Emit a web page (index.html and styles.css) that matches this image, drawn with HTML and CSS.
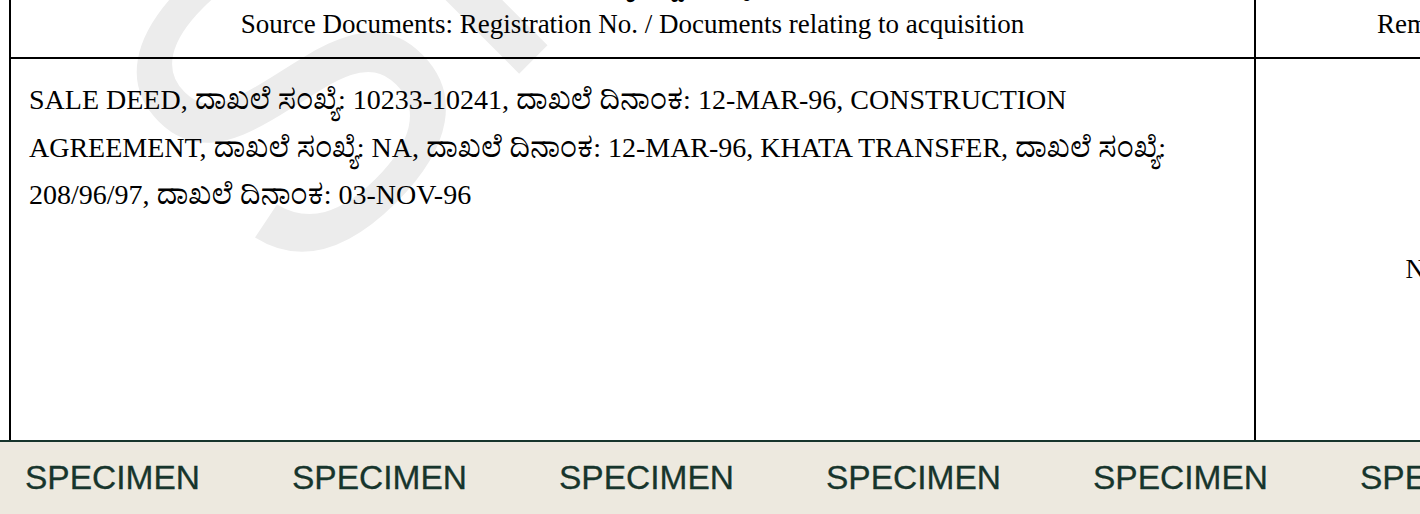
FILE: index.html
```html
<!DOCTYPE html>
<html lang="en">
<head>
<meta charset="utf-8">
<title>RTC Record</title>
<link rel="stylesheet" href="styles.css">
</head>
<body>
<div class="sheet">
  <div class="watermark" aria-hidden="true">SPECIMEN</div>
  <table class="rtc">
    <colgroup>
      <col class="col-main">
      <col class="col-remarks">
    </colgroup>
    <thead>
      <tr>
        <th class="head-cell">
          <span class="head-kn">ಮೂಲ ದಾಖಲೆಗಳು: ನೋಂದಣಿ ಸಂಖ್ಯೆ / ಸ್ವಾಧೀನಕ್ಕೆ ಸಂಬಂಧಿಸಿದ ದಾಖಲೆಗಳು</span>
          <span class="head-en">Source Documents: Registration No. / Documents relating to acquisition</span>
        </th>
        <th class="head-cell">
          <span class="head-kn">ಷರಾ</span>
          <span class="head-en">Remarks</span>
        </th>
      </tr>
    </thead>
    <tbody>
      <tr>
        <td class="body-cell">SALE DEED, ದಾಖಲೆ ಸಂಖ್ಯೆ: 10233-10241, ದಾಖಲೆ ದಿನಾಂಕ: 12-MAR-96, CONSTRUCTION AGREEMENT, ದಾಖಲೆ ಸಂಖ್ಯೆ: NA, ದಾಖಲೆ ದಿನಾಂಕ: 12-MAR-96, KHATA TRANSFER, ದಾಖಲೆ ಸಂಖ್ಯೆ: 208/96/97, ದಾಖಲೆ ದಿನಾಂಕ: 03-NOV-96</td>
        <td class="body-cell remarks-cell">NA</td>
      </tr>
    </tbody>
  </table>
</div>
<footer class="specimen-bar">
  <span class="specimen-word">SPECIMEN</span>
  <span class="specimen-word">SPECIMEN</span>
  <span class="specimen-word">SPECIMEN</span>
  <span class="specimen-word">SPECIMEN</span>
  <span class="specimen-word">SPECIMEN</span>
  <span class="specimen-word">SPECIMEN</span>
</footer>
</body>
</html>
```
FILE: styles.css
```css
html, body {
  margin: 0;
  padding: 0;
  background: #ffffff;
  overflow: hidden;
}

body {
  width: 1420px;
  height: 514px;
  font-family: "Liberation Serif", "Noto Serif Kannada", "Noto Sans Kannada", serif;
  color: #000;
}

.sheet {
  position: relative;
  padding-left: 9px;
  margin-top: -49px;
}

.watermark {
  position: absolute;
  left: 34px;
  top: 93px;
  font-family: "Liberation Sans", Arial, sans-serif;
  font-size: 430px;
  line-height: 1;
  color: #ececec;
  white-space: nowrap;
  transform-origin: 0 0;
  transform: rotate(-45deg);
  z-index: 0;
  pointer-events: none;
}

.rtc {
  position: relative;
  z-index: 1;
  border-collapse: collapse;
  table-layout: fixed;
  width: 1585px;
}

.col-main { width: 1245px; }
.col-remarks { width: 340px; }

.head-cell {
  border: 2px solid #000;
  font-weight: normal;
  font-size: 27px;
  line-height: 36px;
  text-align: center;
  padding: 10px 8px 15px;
  vertical-align: bottom;
}

.head-kn, .head-en {
  display: block;
  white-space: nowrap;
}

.head-kn {
  padding-bottom: 7px;
}

.body-cell {
  border: 2px solid #000;
  font-size: 28px;
  line-height: 47.5px;
  padding: 17px 40px 0 18px;
  height: 424px;
  box-sizing: border-box;
  vertical-align: top;
}

.remarks-cell {
  font-size: 27px;
  text-align: center;
  vertical-align: middle;
  padding: 0 8px;
}

.specimen-bar {
  position: fixed;
  left: 0;
  right: 0;
  bottom: 0;
  height: 72px;
  z-index: 5;
  background: #ede9df;
  border-top: 2px solid #17352c;
  display: flex;
  align-items: center;
  gap: 92px;
  padding-left: 25px;
  overflow: hidden;
  white-space: nowrap;
}

.specimen-word {
  flex: none;
  width: 175px;
  font-family: "Liberation Sans", Arial, sans-serif;
  font-size: 33.5px;
  color: #17352c;
  -webkit-text-stroke: 0.3px #17352c;
}
```
